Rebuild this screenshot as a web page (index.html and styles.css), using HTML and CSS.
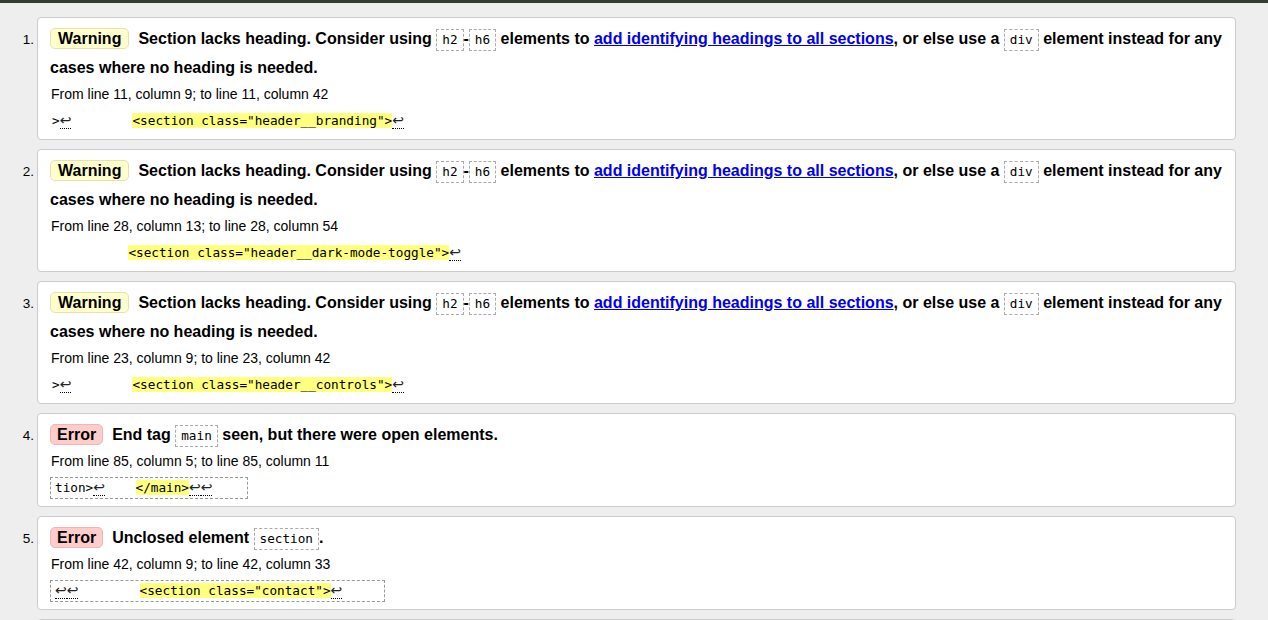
FILE: index.html
```html
<!DOCTYPE html>
<html lang="en">
<head>
<meta charset="utf-8">
<title>Nu Html Checker results</title>
<link rel="stylesheet" href="styles.css">
</head>
<body>
<div class="topbar"></div>
<ol class="results">
  <li class="row">
    <span class="num">1.</span>
    <div class="card warning">
      <p class="msg"><span class="badge">Warning</span>Section lacks heading. Consider using <code>h2</code>-<code>h6</code> elements to <a href="#">add identifying headings to all sections</a>, or else use a <code>div</code> element instead for any cases where no heading is needed.</p>
      <p class="loc">From line 11, column 9; to line 11, column 42</p>
      <p class="extract"><code class="ex">&gt;<span class="lf">↩</span>        <b class="hl">&lt;section class="header__branding"&gt;</b><span class="lf">↩</span></code></p>
    </div>
  </li>
  <li class="row">
    <span class="num">2.</span>
    <div class="card warning">
      <p class="msg"><span class="badge">Warning</span>Section lacks heading. Consider using <code>h2</code>-<code>h6</code> elements to <a href="#">add identifying headings to all sections</a>, or else use a <code>div</code> element instead for any cases where no heading is needed.</p>
      <p class="loc">From line 28, column 13; to line 28, column 54</p>
      <p class="extract"><code class="ex">          <b class="hl">&lt;section class="header__dark-mode-toggle"&gt;</b><span class="lf">↩</span></code></p>
    </div>
  </li>
  <li class="row">
    <span class="num">3.</span>
    <div class="card warning">
      <p class="msg"><span class="badge">Warning</span>Section lacks heading. Consider using <code>h2</code>-<code>h6</code> elements to <a href="#">add identifying headings to all sections</a>, or else use a <code>div</code> element instead for any cases where no heading is needed.</p>
      <p class="loc">From line 23, column 9; to line 23, column 42</p>
      <p class="extract"><code class="ex">&gt;<span class="lf">↩</span>        <b class="hl">&lt;section class="header__controls"&gt;</b><span class="lf">↩</span></code></p>
    </div>
  </li>
  <li class="row">
    <span class="num">4.</span>
    <div class="card error">
      <p class="msg"><span class="badge">Error</span>End tag <code>main</code> seen, but there were open elements.</p>
      <p class="loc">From line 85, column 5; to line 85, column 11</p>
      <p class="extract"><code class="ex">tion&gt;<span class="lf">↩</span>    <b class="hl">&lt;/main&gt;</b><span class="lf">↩</span><span class="lf">↩</span>    </code></p>
    </div>
  </li>
  <li class="row">
    <span class="num">5.</span>
    <div class="card error">
      <p class="msg"><span class="badge">Error</span>Unclosed element <code>section</code>.</p>
      <p class="loc">From line 42, column 9; to line 42, column 33</p>
      <p class="extract"><code class="ex"><span class="lf">↩</span><span class="lf">↩</span>        <b class="hl">&lt;section class="contact"&gt;</b><span class="lf">↩</span>     </code></p>
    </div>
  </li>
  <li class="row">
    <span class="num">6.</span>
    <div class="card error">
      <p class="msg"><span class="badge">Error</span>Unclosed element <code>section</code>.</p>
      <p class="loc">From line 13, column 9; to line 13, column 42</p>
      <p class="extract"><code class="ex"><span class="lf">↩</span>        <b class="hl">&lt;section class="header__branding"&gt;</b><span class="lf">↩</span>     </code></p>
    </div>
  </li>
</ol>
</body>
</html>
```

FILE: styles.css
```css
html, body {
  margin: 0;
  padding: 0;
}

body {
  background: #eeeeee;
  color: #000;
  font-family: "Liberation Sans", Arial, sans-serif;
  font-size: 14px;
}

.topbar {
  height: 3px;
  background: #343c34;
}

.results {
  list-style: none;
  margin: 14px 32px 0 0;
  padding: 0;
  display: flex;
  flex-direction: column;
  gap: 9px;
}

.row {
  display: flex;
  align-items: baseline;
}

.num {
  flex: 0 0 37px;
  box-sizing: border-box;
  padding-right: 3px;
  text-align: right;
  font-size: 13.5px;
}

.card {
  flex: 1;
  min-width: 0;
  background: #fff;
  border: 1px solid #cccccc;
  border-radius: 4px;
  padding: 6px 8px 7px 12px;
}

.msg {
  margin: 0;
  font-size: 16px;
  font-weight: bold;
  line-height: 29px;
}

.badge {
  display: inline-block;
  padding: 0 7px;
  line-height: 19px;
  border: 1px solid;
  border-radius: 5px;
  margin-right: 9px;
}

.warning .badge {
  background: #ffffcc;
  border-color: #e6e2b0;
}

.error .badge {
  background: #ffcccc;
  border-color: #eab8b8;
  padding: 0 6px;
}

.msg code {
  display: inline-block;
  font-family: "DejaVu Sans Mono", monospace;
  font-size: 12.7px;
  font-weight: normal;
  line-height: 20px;
  padding: 0 5px;
  border: 1px dashed #aaaaaa;
}

.msg a {
  color: #0000ee;
  text-decoration: underline;
}

.loc {
  margin: 2px 0 0 1px;
  font-size: 14px;
  line-height: 20px;
}

.extract {
  margin: 6px 0 0 0;
  line-height: 20px;
}

.ex {
  display: inline-block;
  white-space: pre;
  font-family: "DejaVu Sans Mono", monospace;
  font-size: 12.7px;
  line-height: 20px;
  border: 1px dashed transparent;
  padding: 0 1px;
}

.error .ex {
  border-color: #999999;
  padding: 0 4px;
}

.hl {
  font-weight: normal;
  background: #ffff80;
}

.lf {
  font-family: "DejaVu Sans", sans-serif;
  font-size: 14px;
  color: #222;
  border-bottom: 1px dotted #000;
  line-height: 14px;
}
```
